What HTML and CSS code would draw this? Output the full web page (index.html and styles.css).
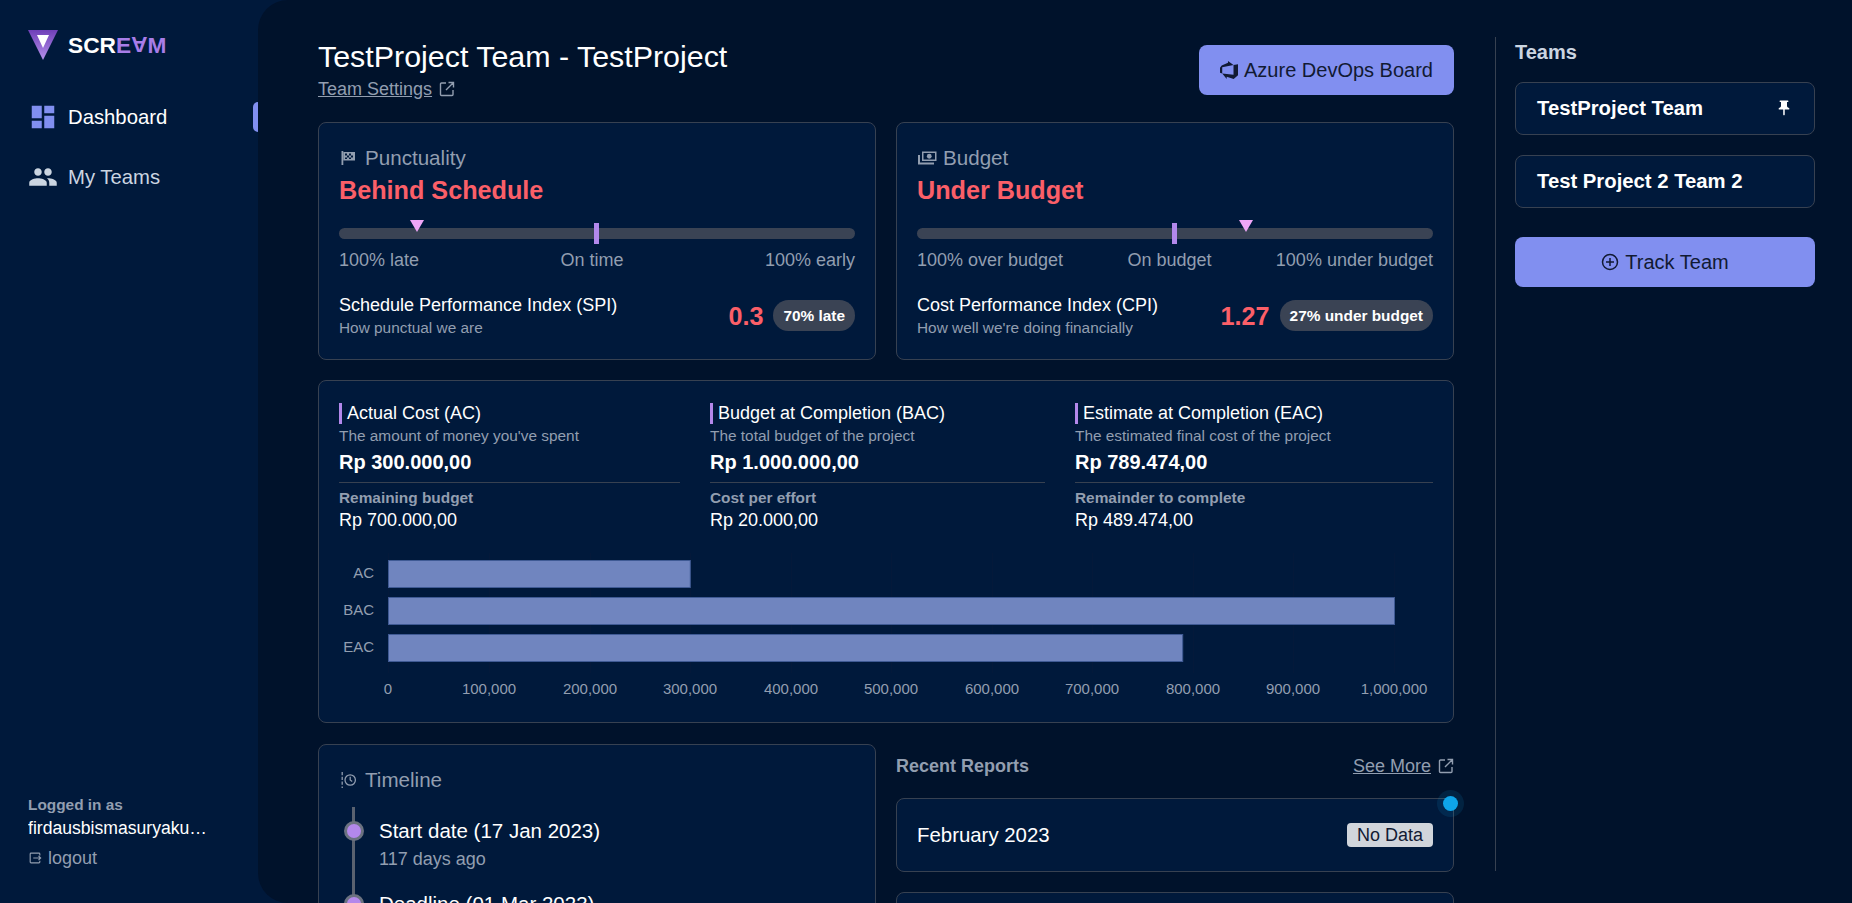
FILE: index.html
```html
<!DOCTYPE html>
<html lang="en">
<head>
    <meta charset="UTF-8">
    <meta name="viewport" content="width=device-width, initial-scale=1.0">
    <title>Scream - TestProject Team</title>
    <link rel="stylesheet" href="styles.css">
</head>
<body>
    <nav class="sidebar">
        <div class="logo">
            <svg class="logo-mark" viewBox="0 0 30 30">
                <defs>
                    <linearGradient id="logoFill" x1="0" y1="0" x2="0" y2="1">
                        <stop offset="0" stop-color="#6f3fb8"/>
                        <stop offset="1" stop-color="#b692ec"/>
                    </linearGradient>
                </defs>
                <polygon points="0,0 30,0 15,30" fill="url(#logoFill)"/>
                <polygon points="9,5 21,5 15,18" fill="#ffffff"/>
            </svg>
            <span>SCR<span class="logo-accent">E<span class="flip">A</span>M</span></span>
        </div>
        <a class="nav-item active">
            <svg class="nav-icon" viewBox="0 0 24 24"><path d="M3 13h8V3H3v10zm0 8h8v-6H3v6zm10 0h8V11h-8v10zm0-18v6h8V3h-8z"/></svg>
            Dashboard
            <span class="nav-marker"></span>
        </a>
        <a class="nav-item">
            <svg class="nav-icon" viewBox="0 0 24 24"><path d="M16 11c1.66 0 2.99-1.34 2.99-3S17.66 5 16 5c-1.66 0-3 1.34-3 3s1.34 3 3 3zm-8 0c1.66 0 2.99-1.34 2.99-3S9.66 5 8 5C6.34 5 5 6.34 5 8s1.34 3 3 3zm0 2c-2.33 0-7 1.17-7 3.5V19h14v-2.5c0-2.33-4.67-3.5-7-3.5zm8 0c-.29 0-.62.02-.97.05 1.16.84 1.97 1.97 1.97 3.45V19h6v-2.5c0-2.33-4.67-3.5-7-3.5z"/></svg>
            My Teams
        </a>
        <div class="user">
            <div class="user-label">Logged in as</div>
            <div class="user-name">firdausbismasuryakusuma</div>
            <a class="logout">
                <svg class="logout-icon" viewBox="0 0 16 16"><path d="M13.5 5V3.5a1 1 0 0 0-1-1h-9a1 1 0 0 0-1 1v9a1 1 0 0 0 1 1h9a1 1 0 0 0 1-1V11M6 8h8.5M12 5.5 14.5 8 12 10.5"/></svg>
                logout
            </a>
        </div>
    </nav>

    <div class="main">
        <div class="content">
            <header class="page-header">
                <div>
                    <h1>TestProject Team - TestProject</h1>
                    <a class="sub-link">Team Settings
                        <svg class="ext-icon" viewBox="0 0 16 16"><path d="M7 2H2.500a1 1 0 0 0-1 1v10.500a1 1 0 0 0 1 1H13a1 1 0 0 0 1-1V9M9.500 1.500H14.500V6.500M14.500 1.500 7 9"/></svg>
                    </a>
                </div>
                <a class="btn">
                    <svg class="btn-icon" viewBox="0 0 24 24"><path d="M0 8.877L2.247 5.91l8.405-3.416V.022l7.37 5.393L2.966 8.338v8.225L0 15.707zm24-4.45v14.651l-5.753 4.9-9.303-3.057v3.056l-5.978-7.416 15.057 1.798V5.415z"/></svg>
                    Azure DevOps Board
                </a>
            </header>

            <div class="two-col">
                <section class="card">
                    <div class="card-title">
                        <svg class="title-icon" viewBox="0 0 16 16"><path class="solid" d="M1.500 1h1.800v14H1.500z"/><path class="solid" d="M3.300 2h11.700v8.500H3.300z"/><path class="cut" d="M5 3.500h2v2H5zM9 3.500h2v2H9zM7 5.500h2v2H7zM11 5.500h2v2h-2zM5 7.500h2v1.500H5zM9 7.500h2v1.500H9z"/></svg>
                        Punctuality
                    </div>
                    <div class="verdict">Behind Schedule</div>
                    <div class="scale">
                        <span class="scale-marker" style="left: 15%"></span>
                        <span class="scale-tick"></span>
                    </div>
                    <div class="scale-labels">
                        <span>100% late</span><span>On time</span><span>100% early</span>
                    </div>
                    <div class="index-row">
                        <div class="index-text">
                            <div class="index-name">Schedule Performance Index (SPI)</div>
                            <div class="index-desc">How punctual we are</div>
                        </div>
                        <div class="index-value">0.3</div>
                        <div class="pill">70% late</div>
                    </div>
                </section>

                <section class="card">
                    <div class="card-title">
                        <svg class="title-icon wide" viewBox="0 0 20 16"><path class="solid" fill-rule="evenodd" d="M5 1.500h14.500v9.500H5zM6.500 3v6.500h11.500V3zM1 5h2v7.500h14v2H1z"/><circle class="solid" cx="12.250" cy="6.250" r="2.400"/></svg>
                        Budget
                    </div>
                    <div class="verdict">Under Budget</div>
                    <div class="scale">
                        <span class="scale-marker" style="left: 63.5%"></span>
                        <span class="scale-tick"></span>
                    </div>
                    <div class="scale-labels">
                        <span>100% over budget</span><span>On budget</span><span>100% under budget</span>
                    </div>
                    <div class="index-row">
                        <div class="index-text">
                            <div class="index-name">Cost Performance Index (CPI)</div>
                            <div class="index-desc">How well we're doing financially</div>
                        </div>
                        <div class="index-value">1.27</div>
                        <div class="pill">27% under budget</div>
                    </div>
                </section>
            </div>

            <section class="card cost-card">
                <div class="cost-grid">
                    <div>
                        <div class="cost-name">Actual Cost (AC)</div>
                        <div class="cost-desc">The amount of money you've spent</div>
                        <div class="cost-value">Rp 300.000,00</div>
                        <div class="cost-extra">
                            <div class="extra-label">Remaining budget</div>
                            <div class="extra-value">Rp 700.000,00</div>
                        </div>
                    </div>
                    <div>
                        <div class="cost-name">Budget at Completion (BAC)</div>
                        <div class="cost-desc">The total budget of the project</div>
                        <div class="cost-value">Rp 1.000.000,00</div>
                        <div class="cost-extra">
                            <div class="extra-label">Cost per effort</div>
                            <div class="extra-value">Rp 20.000,00</div>
                        </div>
                    </div>
                    <div>
                        <div class="cost-name">Estimate at Completion (EAC)</div>
                        <div class="cost-desc">The estimated final cost of the project</div>
                        <div class="cost-value">Rp 789.474,00</div>
                        <div class="cost-extra">
                            <div class="extra-label">Remainder to complete</div>
                            <div class="extra-value">Rp 489.474,00</div>
                        </div>
                    </div>
                </div>

                <svg class="chart" viewBox="0 0 1094 160">
                    <g class="grid-lines">
                        <path d="M49.500 8V128M150.500 8V128M251.500 8V128M351.500 8V128M452.500 8V128M552.500 8V128M653.500 8V128M753.500 8V128M854.500 8V128M954.500 8V128M1055.500 8V128"/>
                    </g>
                    <rect class="bar" x="49.500" y="15.500" width="301.800" height="27"/>
                    <rect class="bar" x="49.500" y="52.500" width="1006" height="27"/>
                    <rect class="bar" x="49.500" y="89.500" width="794.200" height="27"/>
                    <text class="axis end" x="35" y="33">AC</text>
                    <text class="axis end" x="35" y="70">BAC</text>
                    <text class="axis end" x="35" y="107">EAC</text>
                    <text class="axis mid" x="49" y="149">0</text>
                    <text class="axis mid" x="150" y="149">100,000</text>
                    <text class="axis mid" x="251" y="149">200,000</text>
                    <text class="axis mid" x="351" y="149">300,000</text>
                    <text class="axis mid" x="452" y="149">400,000</text>
                    <text class="axis mid" x="552" y="149">500,000</text>
                    <text class="axis mid" x="653" y="149">600,000</text>
                    <text class="axis mid" x="753" y="149">700,000</text>
                    <text class="axis mid" x="854" y="149">800,000</text>
                    <text class="axis mid" x="954" y="149">900,000</text>
                    <text class="axis mid" x="1055" y="149">1,000,000</text>
                </svg>
            </section>

            <div class="two-col">
                <section class="card timeline-card">
                    <div class="card-title">
                        <svg class="title-icon wide" viewBox="0 0 20 20"><path class="line" stroke-dasharray="4 2" d="M1.500 0v20"/><circle class="line" cx="11.500" cy="10" r="6.500"/><path class="line" d="M11.500 6v4l2.500 2"/></svg>
                        Timeline
                    </div>
                    <ul class="timeline">
                        <li>
                            <div class="event-name">Start date (17 Jan 2023)</div>
                            <div class="event-when">117 days ago</div>
                        </li>
                        <li>
                            <div class="event-name">Deadline (01 Mar 2023)</div>
                            <div class="event-when">74 days ago</div>
                        </li>
                    </ul>
                </section>

                <section class="reports">
                    <div class="reports-head">
                        <span class="reports-title">Recent Reports</span>
                        <a class="sub-link">See More
                            <svg class="ext-icon" viewBox="0 0 16 16"><path d="M7 2H2.500a1 1 0 0 0-1 1v10.500a1 1 0 0 0 1 1H13a1 1 0 0 0 1-1V9M9.500 1.500H14.500V6.500M14.500 1.500 7 9"/></svg>
                        </a>
                    </div>
                    <div class="report">
                        <span>February 2023</span>
                        <span class="tag">No Data</span>
                        <span class="report-dot"></span>
                    </div>
                    <div class="report">
                        <span>January 2023</span>
                        <span class="tag">No Data</span>
                    </div>
                </section>
            </div>
        </div>

        <aside class="teams">
            <div class="teams-title">Teams</div>
            <a class="team">TestProject Team
                <svg class="pin" viewBox="0 0 24 24"><path d="M16 9V4h1c.55 0 1-.45 1-1s-.45-1-1-1H7c-.55 0-1 .45-1 1s.45 1 1 1h1v5c0 1.660-1.340 3-3 3v2h5.970v7l1 1 1-1v-7H19v-2c-1.660 0-3-1.340-3-3z"/></svg>
            </a>
            <a class="team">Test Project 2 Team 2</a>
            <a class="btn btn-full">
                <svg class="plus-icon" viewBox="0 0 18 18"><circle cx="9" cy="9" r="7.500"/><path d="M9 5v8M5 9h8"/></svg>
                Track Team
            </a>
        </aside>
    </div>
</body>
</html>
```

FILE: styles.css
```css
* {
    box-sizing: border-box;
}
html, body {
    height: 100%;
}
body {
    margin: 0;
    display: flex;
    overflow: hidden;
    background: #00193b;
    color: #ffffff;
    font-family: "Liberation Sans", Arial, sans-serif;
    font-size: 18px;
    line-height: 24px;
}

/* sidebar */
.sidebar {
    width: 258px;
    flex-shrink: 0;
    display: flex;
    flex-direction: column;
    padding: 30px 0 0 28px;
}
.logo {
    display: flex;
    align-items: center;
    gap: 10px;
    height: 30px;
    margin-bottom: 42px;
    font-size: 22.700px;
    font-weight: bold;
}
.logo-mark {
    width: 30px;
    height: 30px;
}
.logo-accent {
    color: #a87de8;
}
.flip {
    display: inline-block;
    transform: rotate(180deg);
}
.nav-item {
    position: relative;
    display: flex;
    align-items: center;
    gap: 10px;
    height: 30px;
    margin-bottom: 30px;
    font-size: 20.300px;
    color: #cbd5e1;
}
.nav-item.active {
    color: #ffffff;
}
.nav-icon {
    width: 30px;
    height: 30px;
    fill: #cbd5e1;
}
.active .nav-icon {
    fill: #818ff0;
}
.nav-marker {
    position: absolute;
    top: 0;
    right: 0;
    width: 5px;
    height: 30px;
    border-radius: 5px 0 0 5px;
    background: #818ff0;
}
.user {
    margin-top: auto;
    padding-bottom: 33px;
}
.user-label {
    font-size: 15.400px;
    line-height: 20px;
    font-weight: bold;
    color: #929eb0;
}
.user-name {
    width: 183px;
    margin-top: 1px;
    font-size: 17.600px;
    white-space: nowrap;
    overflow: hidden;
    text-overflow: ellipsis;
}
.logout {
    display: flex;
    align-items: center;
    gap: 6px;
    margin-top: 6px;
    color: #929eb0;
}
.logout-icon {
    width: 14px;
    height: 14px;
    fill: none;
    stroke: #929eb0;
    stroke-width: 1.300;
}

/* main area */
.main {
    flex: 1;
    min-width: 0;
    display: flex;
    height: 100vh;
    padding-top: 37px;
    border-radius: 30px 0 0 30px;
    background: #00122b;
    overflow: hidden;
}
.content {
    width: 1136px;
    margin-left: 60px;
    padding-top: 1px;
    flex-shrink: 0;
}
.page-header {
    display: flex;
    justify-content: space-between;
    align-items: flex-start;
    margin-bottom: 20px;
}
.page-header .btn {
    margin-top: 7px;
    padding: 0 21px;
}
h1 {
    margin: 0 0 1px;
    font-size: 30.400px;
    line-height: 36px;
    font-weight: normal;
}
.sub-link {
    display: flex;
    align-items: center;
    gap: 7px;
    height: 27px;
    color: #929eb0;
    text-decoration: underline;
}
.ext-icon {
    width: 16px;
    height: 16px;
    fill: none;
    stroke: #929eb0;
    stroke-width: 1.400;
}
.btn {
    display: flex;
    align-items: center;
    justify-content: center;
    gap: 6px;
    height: 50px;
    padding: 0 20px;
    border-radius: 8px;
    background: #818ff0;
    color: #111a33;
    font-size: 20px;
}
.btn-icon {
    width: 18px;
    height: 18px;
    fill: #111a33;
}
.btn-full {
    margin-top: 29px;
}
.plus-icon {
    width: 18px;
    height: 18px;
    fill: none;
    stroke: #111a33;
    stroke-width: 1.500;
}
.two-col {
    display: grid;
    grid-template-columns: 558px 558px;
    gap: 20px;
    margin-bottom: 20px;
}
.card {
    padding: 21px 20px;
    border: 1px solid #374151;
    border-radius: 8px;
    background: #00193b;
}
.card-title {
    display: flex;
    align-items: center;
    gap: 5px;
    font-size: 20.600px;
    line-height: 28px;
    color: #929eb0;
}
.title-icon {
    width: 16px;
    height: 16px;
    margin-left: 1px;
    margin-right: 4px;
}
.title-icon.wide {
    width: 20px;
    margin: 0 1px 0 0;
}
.solid {
    fill: #929eb0;
}
.cut {
    fill: #00193b;
}
.line {
    fill: none;
    stroke: #929eb0;
    stroke-width: 1.600;
}
.verdict {
    margin-top: 2px;
    font-size: 25.200px;
    line-height: 32px;
    font-weight: bold;
    color: #fb5f68;
}

/* schedule / budget scale */
.scale {
    position: relative;
    height: 11px;
    margin-top: 22px;
    border-radius: 6px;
    background: #3a4354;
}
.scale-tick {
    position: absolute;
    top: -5px;
    left: 50%;
    width: 5px;
    height: 21px;
    margin-left: -3px;
    background: #b388eb;
}
.scale-marker {
    position: absolute;
    top: -8px;
    width: 0;
    height: 0;
    margin-left: -6px;
    border-left: 7px solid transparent;
    border-right: 7px solid transparent;
    border-top: 12px solid #f0a6f8;
}
.scale-labels {
    display: flex;
    justify-content: space-between;
    margin-top: 9px;
    color: #929eb0;
}
.index-row {
    display: flex;
    align-items: center;
    margin-top: 21px;
}
.index-text {
    flex: 1;
}
.index-desc {
    margin-top: 1px;
    font-size: 15.400px;
    line-height: 20px;
    color: #929eb0;
}
.index-value {
    margin-right: 10px;
    font-size: 25.200px;
    font-weight: bold;
    color: #fb5f68;
}
.pill {
    padding: 4px 10px 3px;
    border-radius: 16px;
    background: #3a4354;
    font-size: 15.400px;
    font-weight: bold;
}

/* cost card */
.cost-card {
    height: 343px;
    margin-bottom: 21px;
    padding-top: 20px;
    padding-bottom: 0;
}
.cost-grid {
    display: grid;
    grid-template-columns: 341px 335px 358px;
    gap: 30px;
}
.cost-name {
    display: flex;
    align-items: center;
    height: 24px;
}
.cost-name::before {
    content: "";
    width: 3px;
    height: 21px;
    margin-right: 5px;
    background: #b388eb;
}
.cost-desc {
    margin-top: 1px;
    font-size: 15.400px;
    line-height: 20px;
    color: #929eb0;
}
.cost-value {
    margin-top: 2px;
    font-size: 20px;
    line-height: 28px;
    font-weight: bold;
}
.cost-extra {
    margin-top: 6px;
    padding-top: 5px;
    border-top: 1px solid #374151;
}
.extra-label {
    font-size: 15.400px;
    line-height: 20px;
    font-weight: bold;
    color: #929eb0;
}
.chart {
    display: block;
    width: 1094px;
    height: 160px;
    margin-top: 13px;
}
.grid-lines path {
    fill: none;
    stroke: #04193a;
    stroke-width: 1;
}
.bar {
    fill: #7085bf;
    stroke: #3f5a94;
    stroke-width: 1;
}
.axis {
    fill: #929eb0;
    font-size: 15px;
}
.end {
    text-anchor: end;
}
.mid {
    text-anchor: middle;
}

/* timeline and reports */
.timeline-card {
    height: 300px;
}
.timeline {
    position: relative;
    list-style: none;
    margin: 13px 0 0;
    padding: 0 0 0 40px;
}
.timeline::before {
    content: "";
    position: absolute;
    top: 0;
    bottom: 0;
    left: 13px;
    width: 3px;
    background: #5a6270;
}
.timeline li {
    position: relative;
    height: 73px;
    padding-top: 10px;
}
.timeline li::before {
    content: "";
    position: absolute;
    top: 14px;
    left: -35px;
    width: 14px;
    height: 14px;
    border: 3px solid #6b7280;
    border-radius: 50%;
    background: #b388eb;
}
.event-name {
    font-size: 20.500px;
    line-height: 28px;
}
.event-when {
    margin-top: 2px;
    color: #929eb0;
}
.reports-head {
    display: flex;
    justify-content: space-between;
    align-items: center;
    height: 44px;
    margin-bottom: 10px;
}
.reports-title {
    font-weight: bold;
    color: #929eb0;
}
.report {
    position: relative;
    display: flex;
    justify-content: space-between;
    align-items: center;
    height: 74px;
    margin-bottom: 20px;
    padding: 0 20px;
    border: 1px solid #374151;
    border-radius: 8px;
    background: #00193b;
    font-size: 20.400px;
}
.tag {
    padding: 0 10px;
    border-radius: 4px;
    background: #d1d5db;
    color: #111a33;
    font-size: 18px;
}
.report-dot {
    position: absolute;
    top: -3px;
    right: -5px;
    width: 15px;
    height: 15px;
    border-radius: 50%;
    background: #0ea5e9;
    box-shadow: 0 0 0 6px rgba(14, 165, 233, 0.12);
}

/* team list */
.teams {
    width: 320px;
    height: 834px;
    flex-shrink: 0;
    margin-left: 41px;
    padding: 1px 0 0 19px;
    border-left: 1px solid #374151;
}
.teams-title {
    margin-bottom: 16px;
    font-size: 20px;
    line-height: 28px;
    font-weight: bold;
    color: #cbd5e1;
}
.team {
    display: flex;
    justify-content: space-between;
    align-items: center;
    width: 300px;
    height: 53px;
    margin-bottom: 20px;
    padding: 0 21px 2px;
    border: 1px solid #374151;
    border-radius: 8px;
    background: #00193b;
    font-size: 20.300px;
    font-weight: bold;
}
.team .pin {
    width: 18px;
    height: 18px;
    fill: #ffffff;
}
.teams .btn {
    width: 300px;
}
```
